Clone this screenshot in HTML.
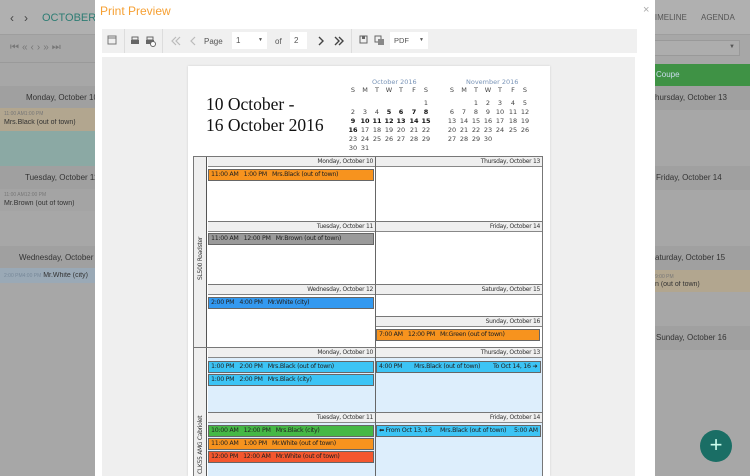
<!DOCTYPE html><html><head><meta charset="utf-8"><style>
*{margin:0;padding:0;box-sizing:border-box}
body{width:750px;height:476px;overflow:hidden;position:relative;background:#a7a7a7;font-family:"Liberation Sans",sans-serif}
.a{position:absolute}
.bg div{position:absolute}
.t{font-size:7px;color:#333;white-space:nowrap;overflow:hidden}
.hd{background:#efefef;border-bottom:1px solid #888;font-size:6px;text-align:right;padding-right:2px;line-height:9px;color:#333;font-family:"DejaVu Sans",sans-serif;letter-spacing:-.3px}
.ev{font-size:6.3px;line-height:10px;padding-left:2px;white-space:nowrap;overflow:hidden;border:1px solid #666;color:#222;font-family:"DejaVu Sans",sans-serif;letter-spacing:-.3px}
.ev i{font-style:normal;position:absolute;top:0}
.cal{font-size:6.5px;color:#444;font-family:"DejaVu Sans",sans-serif}
.cal span{position:absolute;width:12px;text-align:center}
.b{font-weight:bold;color:#111}
</style></head><body>
<div class="bg">
 <div style="left:0;top:0;width:750px;height:35px;background:#b0b0b0;border-bottom:1px solid #9e9e9e"></div>
 <div class="t" style="left:10px;top:11px;font-size:12px;color:#444">&lsaquo;&nbsp;&nbsp;&nbsp;&rsaquo;</div>
 <div class="t" style="left:42px;top:12px;font-size:11px;color:#2e7d74">OCTOBER 10</div>
 <div class="t" style="left:10px;top:42px;font-size:10px;color:#777;letter-spacing:3px">⏮«‹›»⏭</div>
 <div style="left:0;top:62px;width:95px;height:1px;background:#9a9a9a"></div>
 <div style="left:0;top:86px;width:95px;height:22px;background:#a0a0a0"></div>
 <div class="t" style="left:26px;top:93px;font-size:8px">Monday, October 10</div>
 <div style="left:0;top:108px;width:95px;height:23px;background:#b2a68f"></div>
 <div class="t" style="left:4px;top:111px;font-size:5px;color:#777">11:00 AM1:00 PM</div>
 <div class="t" style="left:4px;top:119px;font-size:7px">Mrs.Black (out of town)</div>
 <div style="left:0;top:131px;width:95px;height:35px;background:#8ba9a4"></div>
 <div style="left:0;top:166px;width:95px;height:23px;background:#a0a0a0"></div>
 <div class="t" style="left:25px;top:173px;font-size:8px">Tuesday, October 11</div>
 <div style="left:0;top:189px;width:95px;height:22px;background:#a4a4a4"></div>
 <div class="t" style="left:4px;top:192px;font-size:5px;color:#777">11:00 AM12:00 PM</div>
 <div class="t" style="left:4px;top:200px;font-size:7px">Mr.Brown (out of town)</div>
 <div style="left:0;top:246px;width:95px;height:22px;background:#a0a0a0"></div>
 <div class="t" style="left:19px;top:253px;font-size:8px">Wednesday, October 1</div>
 <div style="left:0;top:268px;width:95px;height:15px;background:#9aa9b6"></div>
 <div class="t" style="left:4px;top:272px;font-size:7px"><span style="font-size:5px;color:#789">2:00 PM4:00 PM</span> Mr.White (city)</div>
 <div class="t" style="left:650px;top:13px;font-size:8px;color:#555">TIMELINE</div>
 <div class="t" style="left:701px;top:13px;font-size:8px;color:#555">AGENDA</div>
 <div style="left:650px;top:40px;width:90px;height:16px;border:1px solid #999;background:#adadad"></div>
 <div class="t" style="left:729px;top:44px;font-size:6px;color:#555">▼</div>
 <div style="left:655px;top:64px;width:95px;height:22px;background:#3f9245"></div>
 <div class="t" style="left:656px;top:70px;font-size:8px;color:#cde">Coupe</div>
 <div style="left:655px;top:86px;width:95px;height:24px;background:#a0a0a0"></div>
 <div class="t" style="left:655px;top:93px;font-size:8px">hursday, October 13</div>
 <div style="left:655px;top:166px;width:95px;height:24px;background:#a0a0a0"></div>
 <div class="t" style="left:656px;top:173px;font-size:8px">Friday, October 14</div>
 <div style="left:655px;top:246px;width:95px;height:24px;background:#a0a0a0"></div>
 <div class="t" style="left:655px;top:253px;font-size:8px">aturday, October 15</div>
 <div style="left:655px;top:270px;width:95px;height:22px;background:#b2a68f"></div>
 <div class="t" style="left:655px;top:274px;font-size:5px;color:#777">9:00 PM</div>
 <div class="t" style="left:655px;top:281px;font-size:7px">n (out of town)</div>
 <div style="left:655px;top:326px;width:95px;height:24px;background:#a0a0a0"></div>
 <div class="t" style="left:656px;top:333px;font-size:8px">Sunday, October 16</div>
 <div style="left:700px;top:430px;width:32px;height:32px;border-radius:50%;background:#1a6e65;color:#cfe;font-size:22px;line-height:30px;text-align:center">+</div>
</div>

<div class="a" style="left:95px;top:0;width:560px;height:476px;background:#fff">
 <div class="a" style="left:5px;top:4px;font-size:12px;color:#f6a033">Print Preview</div>
 <div class="a" style="left:548px;top:4px;font-size:11px;color:#aaa">×</div>
 <div class="a" style="left:7px;top:29px;width:535px;height:24px;background:#f0f0f0"></div>
 <div class="a" style="left:7px;top:57px;width:533px;height:419px;background:#efefef"></div>
 <div class="a" style="left:29px;top:29px;width:1px;height:24px;background:#ddd"></div>
 <div class="a" style="left:67px;top:29px;width:1px;height:24px;background:#ddd"></div>
 <div class="a" style="left:256px;top:29px;width:1px;height:24px;background:#ddd"></div>
 <svg class="a" style="left:12px;top:35px" width="10" height="10"><rect x="1" y="1" width="8" height="8" fill="none" stroke="#777"/><line x1="1" y1="3" x2="9" y2="3" stroke="#777"/></svg>
 <svg class="a" style="left:35px;top:36px" width="10" height="10"><rect x="2" y="1" width="6" height="3" fill="none" stroke="#666"/><rect x="1" y="4" width="8" height="4" fill="#666"/></svg>
 <svg class="a" style="left:50px;top:36px" width="11" height="11"><rect x="2" y="1" width="6" height="3" fill="none" stroke="#666"/><rect x="1" y="4" width="8" height="4" fill="#666"/><circle cx="8" cy="8" r="2.5" fill="#fff" stroke="#666"/></svg>
 <svg class="a" style="left:75px;top:36px" width="12" height="10"><path d="M6 1 2 5 6 9M10 1 6 5 10 9" fill="none" stroke="#bbb" stroke-width="1.2"/></svg>
 <svg class="a" style="left:94px;top:36px" width="8" height="10"><path d="M6 1 2 5 6 9" fill="none" stroke="#bbb" stroke-width="1.2"/></svg>
 <div class="a" style="left:109px;top:37px;font-size:8px;color:#555">Page</div>
 <div class="a" style="left:137px;top:32px;width:35px;height:17px;background:#fff;font-size:8px;color:#555;padding:4px 4px">1<span style="float:right;font-size:5px;margin-top:1px">▼</span></div>
 <div class="a" style="left:180px;top:37px;font-size:8px;color:#555">of</div>
 <div class="a" style="left:195px;top:32px;width:17px;height:17px;background:#fff;font-size:8px;color:#555;padding:4px 4px">2</div>
 <svg class="a" style="left:222px;top:36px" width="8" height="10"><path d="M2 1 6 5 2 9" fill="none" stroke="#444" stroke-width="1.4"/></svg>
 <svg class="a" style="left:238px;top:36px" width="12" height="10"><path d="M2 1 6 5 2 9M6 1 10 5 6 9" fill="none" stroke="#444" stroke-width="1.4"/></svg>
 <svg class="a" style="left:264px;top:35px" width="9" height="9"><rect x="1" y="1" width="7" height="7" fill="none" stroke="#666"/><rect x="3" y="1" width="3" height="3" fill="#666"/></svg>
 <svg class="a" style="left:279px;top:35px" width="11" height="11"><rect x="1" y="1" width="6" height="6" fill="none" stroke="#666"/><rect x="4" y="4" width="6" height="6" fill="#888"/></svg>
 <div class="a" style="left:295px;top:32px;width:38px;height:17px;background:#fff;font-size:7.5px;color:#555;padding:4px 4px">PDF<span style="float:right;font-size:5px;margin-top:1px">▼</span></div>

 <div class="a" style="left:93px;top:66px;width:362px;height:410px;background:#fff;box-shadow:0 0 2px #ccc"></div>
 <div class="a" style="left:111px;top:94px;font-family:'Liberation Serif',serif;font-size:17.5px;line-height:21px;color:#111">10 October -<br>16 October 2016</div>
</div>

<div class="a cal" style="left:0;top:0;width:750px;height:476px">
 <div class="a" style="left:372px;top:78px;font-size:6.5px;color:#7a95b8">October 2016</div>
 <div class="a" style="left:466px;top:78px;font-size:6.5px;color:#7a95b8">November 2016</div>
 <div class="a" style="left:347px;top:86px">
  <span style="left:0">S</span><span style="left:12px">M</span><span style="left:24px">T</span><span style="left:36px">W</span><span style="left:48px">T</span><span style="left:61px">F</span><span style="left:73px">S</span>
  <span style="left:73px;top:13px">1</span>
  <span style="left:0;top:22px">2</span><span style="left:12px;top:22px">3</span><span style="left:24px;top:22px">4</span><span class="b" style="left:36px;top:22px">5</span><span class="b" style="left:48px;top:22px">6</span><span class="b" style="left:61px;top:22px">7</span><span class="b" style="left:73px;top:22px">8</span>
  <span class="b" style="left:0;top:31px">9</span><span class="b" style="left:12px;top:31px">10</span><span class="b" style="left:24px;top:31px">11</span><span class="b" style="left:36px;top:31px">12</span><span class="b" style="left:48px;top:31px">13</span><span class="b" style="left:61px;top:31px">14</span><span class="b" style="left:73px;top:31px">15</span>
  <span class="b" style="left:0;top:40px">16</span><span style="left:12px;top:40px">17</span><span style="left:24px;top:40px">18</span><span style="left:36px;top:40px">19</span><span style="left:48px;top:40px">20</span><span style="left:61px;top:40px">21</span><span style="left:73px;top:40px">22</span>
  <span style="left:0;top:49px">23</span><span style="left:12px;top:49px">24</span><span style="left:24px;top:49px">25</span><span style="left:36px;top:49px">26</span><span style="left:48px;top:49px">27</span><span style="left:61px;top:49px">28</span><span style="left:73px;top:49px">29</span>
  <span style="left:0;top:58px">30</span><span style="left:12px;top:58px">31</span>
 </div>
 <div class="a" style="left:446px;top:86px">
  <span style="left:0">S</span><span style="left:12px">M</span><span style="left:24px">T</span><span style="left:36px">W</span><span style="left:48px">T</span><span style="left:61px">F</span><span style="left:73px">S</span>
  <span style="left:24px;top:13px">1</span><span style="left:36px;top:13px">2</span><span style="left:48px;top:13px">3</span><span style="left:61px;top:13px">4</span><span style="left:73px;top:13px">5</span>
  <span style="left:0;top:22px">6</span><span style="left:12px;top:22px">7</span><span style="left:24px;top:22px">8</span><span style="left:36px;top:22px">9</span><span style="left:48px;top:22px">10</span><span style="left:61px;top:22px">11</span><span style="left:73px;top:22px">12</span>
  <span style="left:0;top:31px">13</span><span style="left:12px;top:31px">14</span><span style="left:24px;top:31px">15</span><span style="left:36px;top:31px">16</span><span style="left:48px;top:31px">17</span><span style="left:61px;top:31px">18</span><span style="left:73px;top:31px">19</span>
  <span style="left:0;top:40px">20</span><span style="left:12px;top:40px">21</span><span style="left:24px;top:40px">22</span><span style="left:36px;top:40px">23</span><span style="left:48px;top:40px">24</span><span style="left:61px;top:40px">25</span><span style="left:73px;top:40px">26</span>
  <span style="left:0;top:49px">27</span><span style="left:12px;top:49px">28</span><span style="left:24px;top:49px">29</span><span style="left:36px;top:49px">30</span>
 </div>
</div>

<div class="a" style="left:193px;top:156px;width:350px;height:320px;border:1px solid #777;border-bottom:none;background:#fff"></div>
<div class="a" style="left:194px;top:157px;width:13px;height:319px;background:#efefef;border-right:1px solid #555"></div>
<div class="a" style="left:193px;top:347px;width:14px;height:1px;background:#777"></div>
<div class="a" style="left:208px;top:348px;width:334px;height:128px;background:#ddeefc"></div>
<div class="a" style="left:375px;top:157px;width:1px;height:319px;background:#666"></div>
<div class="a" style="left:197px;top:280px;transform:rotate(-90deg);transform-origin:0 0;font-size:6px;color:#333;white-space:nowrap;font-family:'DejaVu Sans',sans-serif;letter-spacing:-.3px">SL500 Roadster</div>
<div class="a" style="left:197px;top:474px;transform:rotate(-90deg);transform-origin:0 0;font-size:6px;color:#333;white-space:nowrap;font-family:'DejaVu Sans',sans-serif;letter-spacing:-.3px">CLK55 AMG Cabriolet</div>

<div class="a hd" style="left:208px;top:157px;width:167px;height:10px">Monday, October 10</div>
<div class="a hd" style="left:376px;top:157px;width:166px;height:10px">Thursday, October 13</div>
<div class="a ev" style="left:208px;top:169px;width:166px;height:12px;background:#f7931e">11:00 AM&nbsp;&nbsp; 1:00 PM&nbsp;&nbsp; Mrs.Black (out of town)</div>
<div class="a" style="left:208px;top:221px;width:334px;height:1px;background:#777"></div>
<div class="a hd" style="left:208px;top:222px;width:167px;height:10px">Tuesday, October 11</div>
<div class="a hd" style="left:376px;top:222px;width:166px;height:10px">Friday, October 14</div>
<div class="a ev" style="left:208px;top:233px;width:166px;height:12px;background:#9a9a9a">11:00 AM&nbsp;&nbsp; 12:00 PM&nbsp;&nbsp; Mr.Brown (out of town)</div>
<div class="a" style="left:208px;top:284px;width:334px;height:1px;background:#777"></div>
<div class="a hd" style="left:208px;top:285px;width:167px;height:10px">Wednesday, October 12</div>
<div class="a hd" style="left:376px;top:285px;width:166px;height:10px">Saturday, October 15</div>
<div class="a ev" style="left:208px;top:297px;width:166px;height:12px;background:#3399f0">2:00 PM&nbsp;&nbsp; 4:00 PM&nbsp;&nbsp; Mr.White (city)</div>
<div class="a" style="left:376px;top:316px;width:166px;height:1px;background:#777"></div>
<div class="a hd" style="left:376px;top:317px;width:166px;height:10px">Sunday, October 16</div>
<div class="a ev" style="left:376px;top:329px;width:164px;height:12px;background:#f7931e">7:00 AM&nbsp;&nbsp; 12:00 PM&nbsp;&nbsp; Mr.Green (out of town)</div>

<div class="a" style="left:207px;top:347px;width:336px;height:1px;background:#777"></div>
<div class="a hd" style="left:208px;top:348px;width:167px;height:10px">Monday, October 10</div>
<div class="a hd" style="left:376px;top:348px;width:166px;height:10px">Thursday, October 13</div>
<div class="a ev" style="left:208px;top:361px;width:166px;height:12px;background:#3cc4f5">1:00 PM&nbsp;&nbsp; 2:00 PM&nbsp;&nbsp; Mrs.Black (out of town)</div>
<div class="a ev" style="left:208px;top:374px;width:166px;height:12px;background:#3cc4f5">1:00 PM&nbsp;&nbsp; 2:00 PM&nbsp;&nbsp; Mrs.Black (city)</div>
<div class="a ev" style="left:376px;top:361px;width:165px;height:12px;background:#3cc4f5"><i style="left:2px">4:00 PM</i><i style="left:37px">Mrs.Black (out of town)</i><i style="left:116px">To Oct 14, 16 ➜</i></div>
<div class="a" style="left:208px;top:412px;width:334px;height:1px;background:#777"></div>
<div class="a hd" style="left:208px;top:413px;width:167px;height:10px">Tuesday, October 11</div>
<div class="a hd" style="left:376px;top:413px;width:166px;height:10px">Friday, October 14</div>
<div class="a ev" style="left:208px;top:425px;width:166px;height:12px;background:#45b845">10:00 AM&nbsp;&nbsp; 12:00 PM&nbsp;&nbsp; Mrs.Black (city)</div>
<div class="a ev" style="left:208px;top:438px;width:166px;height:12px;background:#f7931e">11:00 AM&nbsp;&nbsp; 1:00 PM&nbsp;&nbsp; Mr.White (out of town)</div>
<div class="a ev" style="left:208px;top:451px;width:166px;height:12px;background:#f4572e">12:00 PM&nbsp;&nbsp; 12:00 AM&nbsp;&nbsp; Mr.White (out of town)</div>
<div class="a ev" style="left:376px;top:425px;width:165px;height:12px;background:#3cc4f5"><i style="left:2px">⬅ From Oct 13, 16</i><i style="left:63px">Mrs.Black (out of town)</i><i style="left:137px">5:00 AM</i></div>
</body></html>
